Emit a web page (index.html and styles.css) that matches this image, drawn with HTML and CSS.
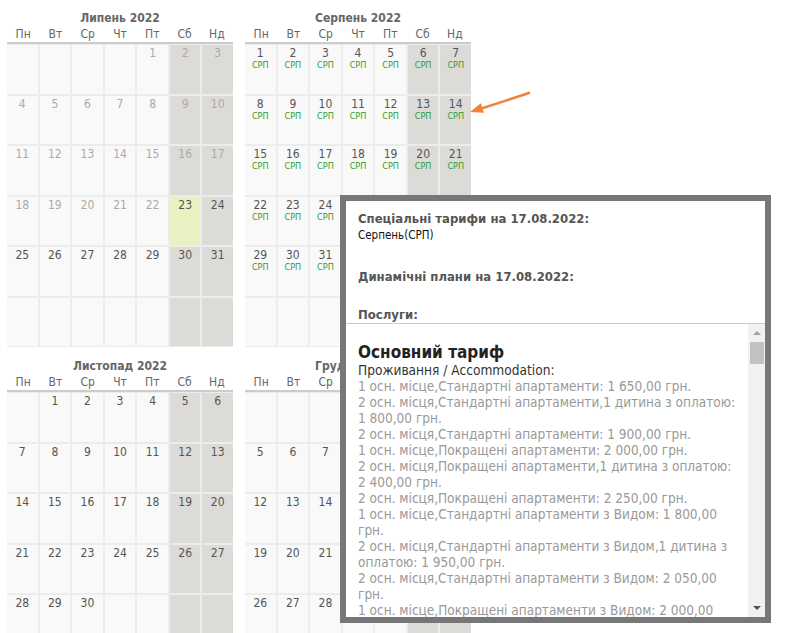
FILE: index.html
```
<!DOCTYPE html>
<html lang="uk">
<head>
  <meta charset="utf-8">
  <title>Календар тарифів</title>
  <link rel="stylesheet" href="styles.css">
</head>
<body>
<div class="page">
  <div class="months" id="months"></div>

  <svg class="pointer" width="70" height="30" viewBox="0 0 70 30">
    <line x1="64" y1="5" x2="15" y2="21" stroke="#f2813a" stroke-width="2.5" stroke-linecap="round"/>
    <polygon points="5,24 15.9,15.2 18.9,24.8" fill="#f2813a"/>
  </svg>

  <div class="popup">
    <div class="popup-head">
      <div class="ph-title">Спеціальні тарифи на 17.08.2022:</div>
      <div class="ph-text">Серпень(СРП)</div>
      <div class="ph-title gap1">Динамічні плани на 17.08.2022:</div>
      <div class="ph-title gap2">Послуги:</div>
    </div>
    <div class="rates">
      <div class="rates-body">
        <div class="rates-title">Основний тариф</div>
        <div class="rates-sub">Проживання / Accommodation:</div>
        <div class="rate">1 осн. місце,Стандартні апартаменти: 1 650,00 грн.</div>
        <div class="rate">2 осн. місця,Стандартні апартаменти,1 дитина з оплатою: 1 800,00 грн.</div>
        <div class="rate">2 осн. місця,Стандартні апартаменти: 1 900,00 грн.</div>
        <div class="rate">1 осн. місце,Покращені апартаменти: 2 000,00 грн.</div>
        <div class="rate">2 осн. місця,Покращені апартаменти,1 дитина з оплатою: 2 400,00 грн.</div>
        <div class="rate">2 осн. місця,Покращені апартаменти: 2 250,00 грн.</div>
        <div class="rate">1 осн. місце,Стандартні апартаменти з Видом: 1 800,00 грн.</div>
        <div class="rate">2 осн. місця,Стандартні апартаменти з Видом,1 дитина з оплатою: 1 950,00 грн.</div>
        <div class="rate">2 осн. місця,Стандартні апартаменти з Видом: 2 050,00 грн.</div>
        <div class="rate">1 осн. місце,Покращені апартаменти з Видом: 2 000,00 грн.</div>
        <div class="rate">2 осн. місця,Покращені апартаменти з Видом: 2 200,00 грн.</div>
      </div>
      <div class="scrollbar">
        <span class="sb-up"></span>
        <span class="sb-thumb"></span>
        <span class="sb-down"></span>
      </div>
    </div>
  </div>
</div>

<script>
  // місяці календаря: зсув першого дня (0 = Пн), кількість днів
  var months = [
    {name: 'Липень 2022', start: 4, days: 31, past: 22, today: 23},
    {name: 'Серпень 2022', start: 0, days: 31, tag: 'СРП'},
    {name: 'Листопад 2022', start: 1, days: 30},
    {name: 'Грудень 2022', start: 3, days: 31}
  ];
  var week = ['Пн', 'Вт', 'Ср', 'Чт', 'Пт', 'Сб', 'Нд'];

  var html = '';
  for (var m = 0; m < months.length; m++) {
    var mo = months[m];
    html += '<div class="month"><div class="month-title">' + mo.name + '</div><div class="weekdays">';
    for (var w = 0; w < 7; w++) html += '<span>' + week[w] + '</span>';
    html += '</div><div class="days">';
    for (var i = 0; i < 42; i++) {
      var d = i - mo.start + 1;
      var cls = 'day';
      if (i % 7 > 4) cls += ' we';
      var inner = '';
      if (d >= 1 && d <= mo.days) {
        if (mo.past && d <= mo.past) cls += ' past';
        if (mo.today == d) cls += ' today';
        inner = d;
        if (mo.tag) inner += '<span class="tag">' + mo.tag + '</span>';
      }
      html += '<div class="' + cls + '">' + inner + '</div>';
    }
    html += '</div></div>';
  }
  document.getElementById('months').innerHTML = html;
</script>
</body>
</html>
```

FILE: styles.css
```
body {
  margin: 0;
  background: #fff;
  font-family: Tahoma, "DejaVu Sans Condensed", "Liberation Sans", sans-serif;
}
.page {position: relative; height: 633px; overflow: hidden;}

/* календар */
.months {
  display: grid;
  grid-template-columns: 226px 226px;
  column-gap: 12px;
  row-gap: 11px;
  padding: 10px 0 0 7px;
}
.month-title {text-align: center; font-weight: bold; font-size: 12px; line-height: 16px; color: #666;}
.weekdays {
  display: grid;
  grid-template-columns: repeat(7, 1fr);
  text-align: center;
  font-size: 12px;
  line-height: 16px;
  color: #666;
  border-bottom: 2px solid #ccc;
}
.days {
  display: grid;
  grid-template-columns: repeat(7, 1fr);
  grid-auto-rows: 48.5px;
  gap: 2px;
  padding: 1px 0;
  background: #ececec;
}
.day {
  background: #f9f9f9;
  text-align: center;
  font-size: 12px;
  line-height: 14px;
  padding-top: 1px;
  color: #555;
}
.day.we {background: #dcdbd8;}
.day.past {color: #aaa;}
.day.today {background: #eaf1c3;}
.tag {display: block; font-size: 9px; line-height: 10px; color: #2f9a2f;}

/* стрілка */
.pointer {position: absolute; left: 465px; top: 88px;}

/* спливаюче вікно */
.popup {
  position: absolute;
  left: 340px;
  top: 195px;
  width: 419px;
  height: 416px;
  border: 6px solid #777;
  background: #fff;
  display: flex;
  flex-direction: column;
}
.popup-head {padding: 10px 12px 0; height: 112px; overflow: hidden;}
.ph-title {font-weight: bold; font-size: 13px; line-height: 16px; color: #555;}
.ph-text {font-size: 11.5px; line-height: 16px; color: #111;}
.ph-title.gap1 {margin-top: 26px;}
.ph-title.gap2 {margin-top: 22px;}

.rates {flex: 1; display: flex; border-top: 1px solid #ccc; overflow: hidden;}
.rates-body {flex: 1; padding: 18px 8px 0 12px; overflow: hidden;}
.rates-title {font-weight: bold; font-size: 17px; line-height: 20px; color: #222;}
.rates-sub {font-size: 13.6px; line-height: 16px; color: #333;}
.rate {font-size: 13.5px; line-height: 16px; color: #999;}

.scrollbar {
  width: 17px;
  background: #f1f1f1;
  display: flex;
  flex-direction: column;
  align-items: center;
}
.sb-up, .sb-down {width: 0; height: 0; border-left: 4px solid transparent; border-right: 4px solid transparent;}
.sb-up {border-bottom: 4px solid #a3a3a3; margin-top: 7px;}
.sb-thumb {width: 14px; height: 22px; background: #c1c1c1; margin-top: 7px;}
.sb-down {border-top: 4px solid #505050; margin-top: auto; margin-bottom: 7px;}
```
